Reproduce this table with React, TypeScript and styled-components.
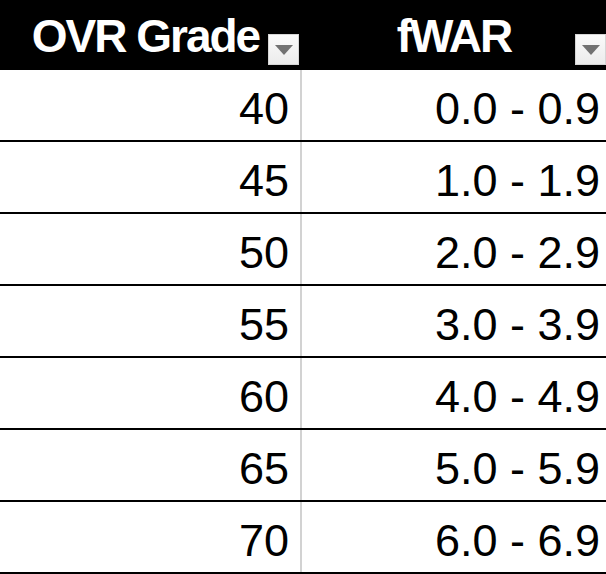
import styled, { createGlobalStyle } from "styled-components";

/**
 * 등급별 fWAR 표 데이터
 */
const rows: { grade: number; war: string }[] = [
  { grade: 40, war: "0.0 - 0.9" },
  { grade: 45, war: "1.0 - 1.9" },
  { grade: 50, war: "2.0 - 2.9" },
  { grade: 55, war: "3.0 - 3.9" },
  { grade: 60, war: "4.0 - 4.9" },
  { grade: 65, war: "5.0 - 5.9" },
  { grade: 70, war: "6.0 - 6.9" },
];

const GlobalStyle = createGlobalStyle`
  html, body {
    margin: 0;
    padding: 0;
    background: #ffffff;
    overflow: hidden;
  }
  body {
    font-family: "Liberation Sans", Arial, sans-serif;
  }
`;

// 필터 드롭다운 버튼
const FilterButton = ({ right }: { right: number }) => (
  <StyledFilter $right={right} aria-label="filter">
    <svg width="18" height="10" viewBox="0 0 18 10">
      <polygon points="0,0 18,0 9,10" fill="#727272" />
    </svg>
  </StyledFilter>
);

const App = () => {
  return (
    <StyledTable>
      <GlobalStyle />
      {/* 헤더 */}
      <HeaderRow>
        <HeaderCell $shift={11}>
          OVR Grade
          <FilterButton right={3} />
        </HeaderCell>
        <HeaderCell $shift={0}>
          fWAR
          <FilterButton right={0} />
        </HeaderCell>
      </HeaderRow>

      {/* 본문 */}
      {rows.map((row) => (
        <BodyRow key={row.grade}>
          <GradeCell>{row.grade}</GradeCell>
          <WarCell>{row.war}</WarCell>
        </BodyRow>
      ))}
    </StyledTable>
  );
};

export default App;

const StyledTable = styled.div`
  width: 606px;
  height: 574px;
  display: flex;
  flex-direction: column;
  background: #ffffff;
`;

const HeaderRow = styled.div`
  display: grid;
  grid-template-columns: 302px 304px;
  height: 70px;
  background: #000000;
`;

const HeaderCell = styled.div<{ $shift: number }>`
  position: relative;
  display: flex;
  align-items: center;
  justify-content: center;
  box-sizing: border-box;
  padding-top: 1px;
  padding-right: ${(p) => p.$shift}px;
  color: #ffffff;
  font-size: 46px;
  font-weight: bold;
  letter-spacing: -2px;
  white-space: nowrap;
`;

const StyledFilter = styled.div<{ $right: number }>`
  position: absolute;
  top: 34px;
  right: ${(p) => p.$right}px;
  width: 31px;
  height: 31px;
  box-sizing: border-box;
  display: flex;
  align-items: center;
  justify-content: center;
  background: linear-gradient(#fafafa, #ececec);
  border: 1px solid #d6d6d6;
`;

const BodyRow = styled.div`
  display: grid;
  grid-template-columns: 302px 304px;
  height: 72px;
  box-sizing: border-box;
  border-bottom: 2px solid #000000;
`;

const Cell = styled.div`
  box-sizing: border-box;
  padding-top: 13px;
  font-size: 45px;
  color: #000000;
  text-align: right;
  white-space: nowrap;
`;

const GradeCell = styled(Cell)`
  border-right: 2px solid #d2d2d2;
  padding-right: 11px;
`;

const WarCell = styled(Cell)`
  padding-right: 6px;
`;
